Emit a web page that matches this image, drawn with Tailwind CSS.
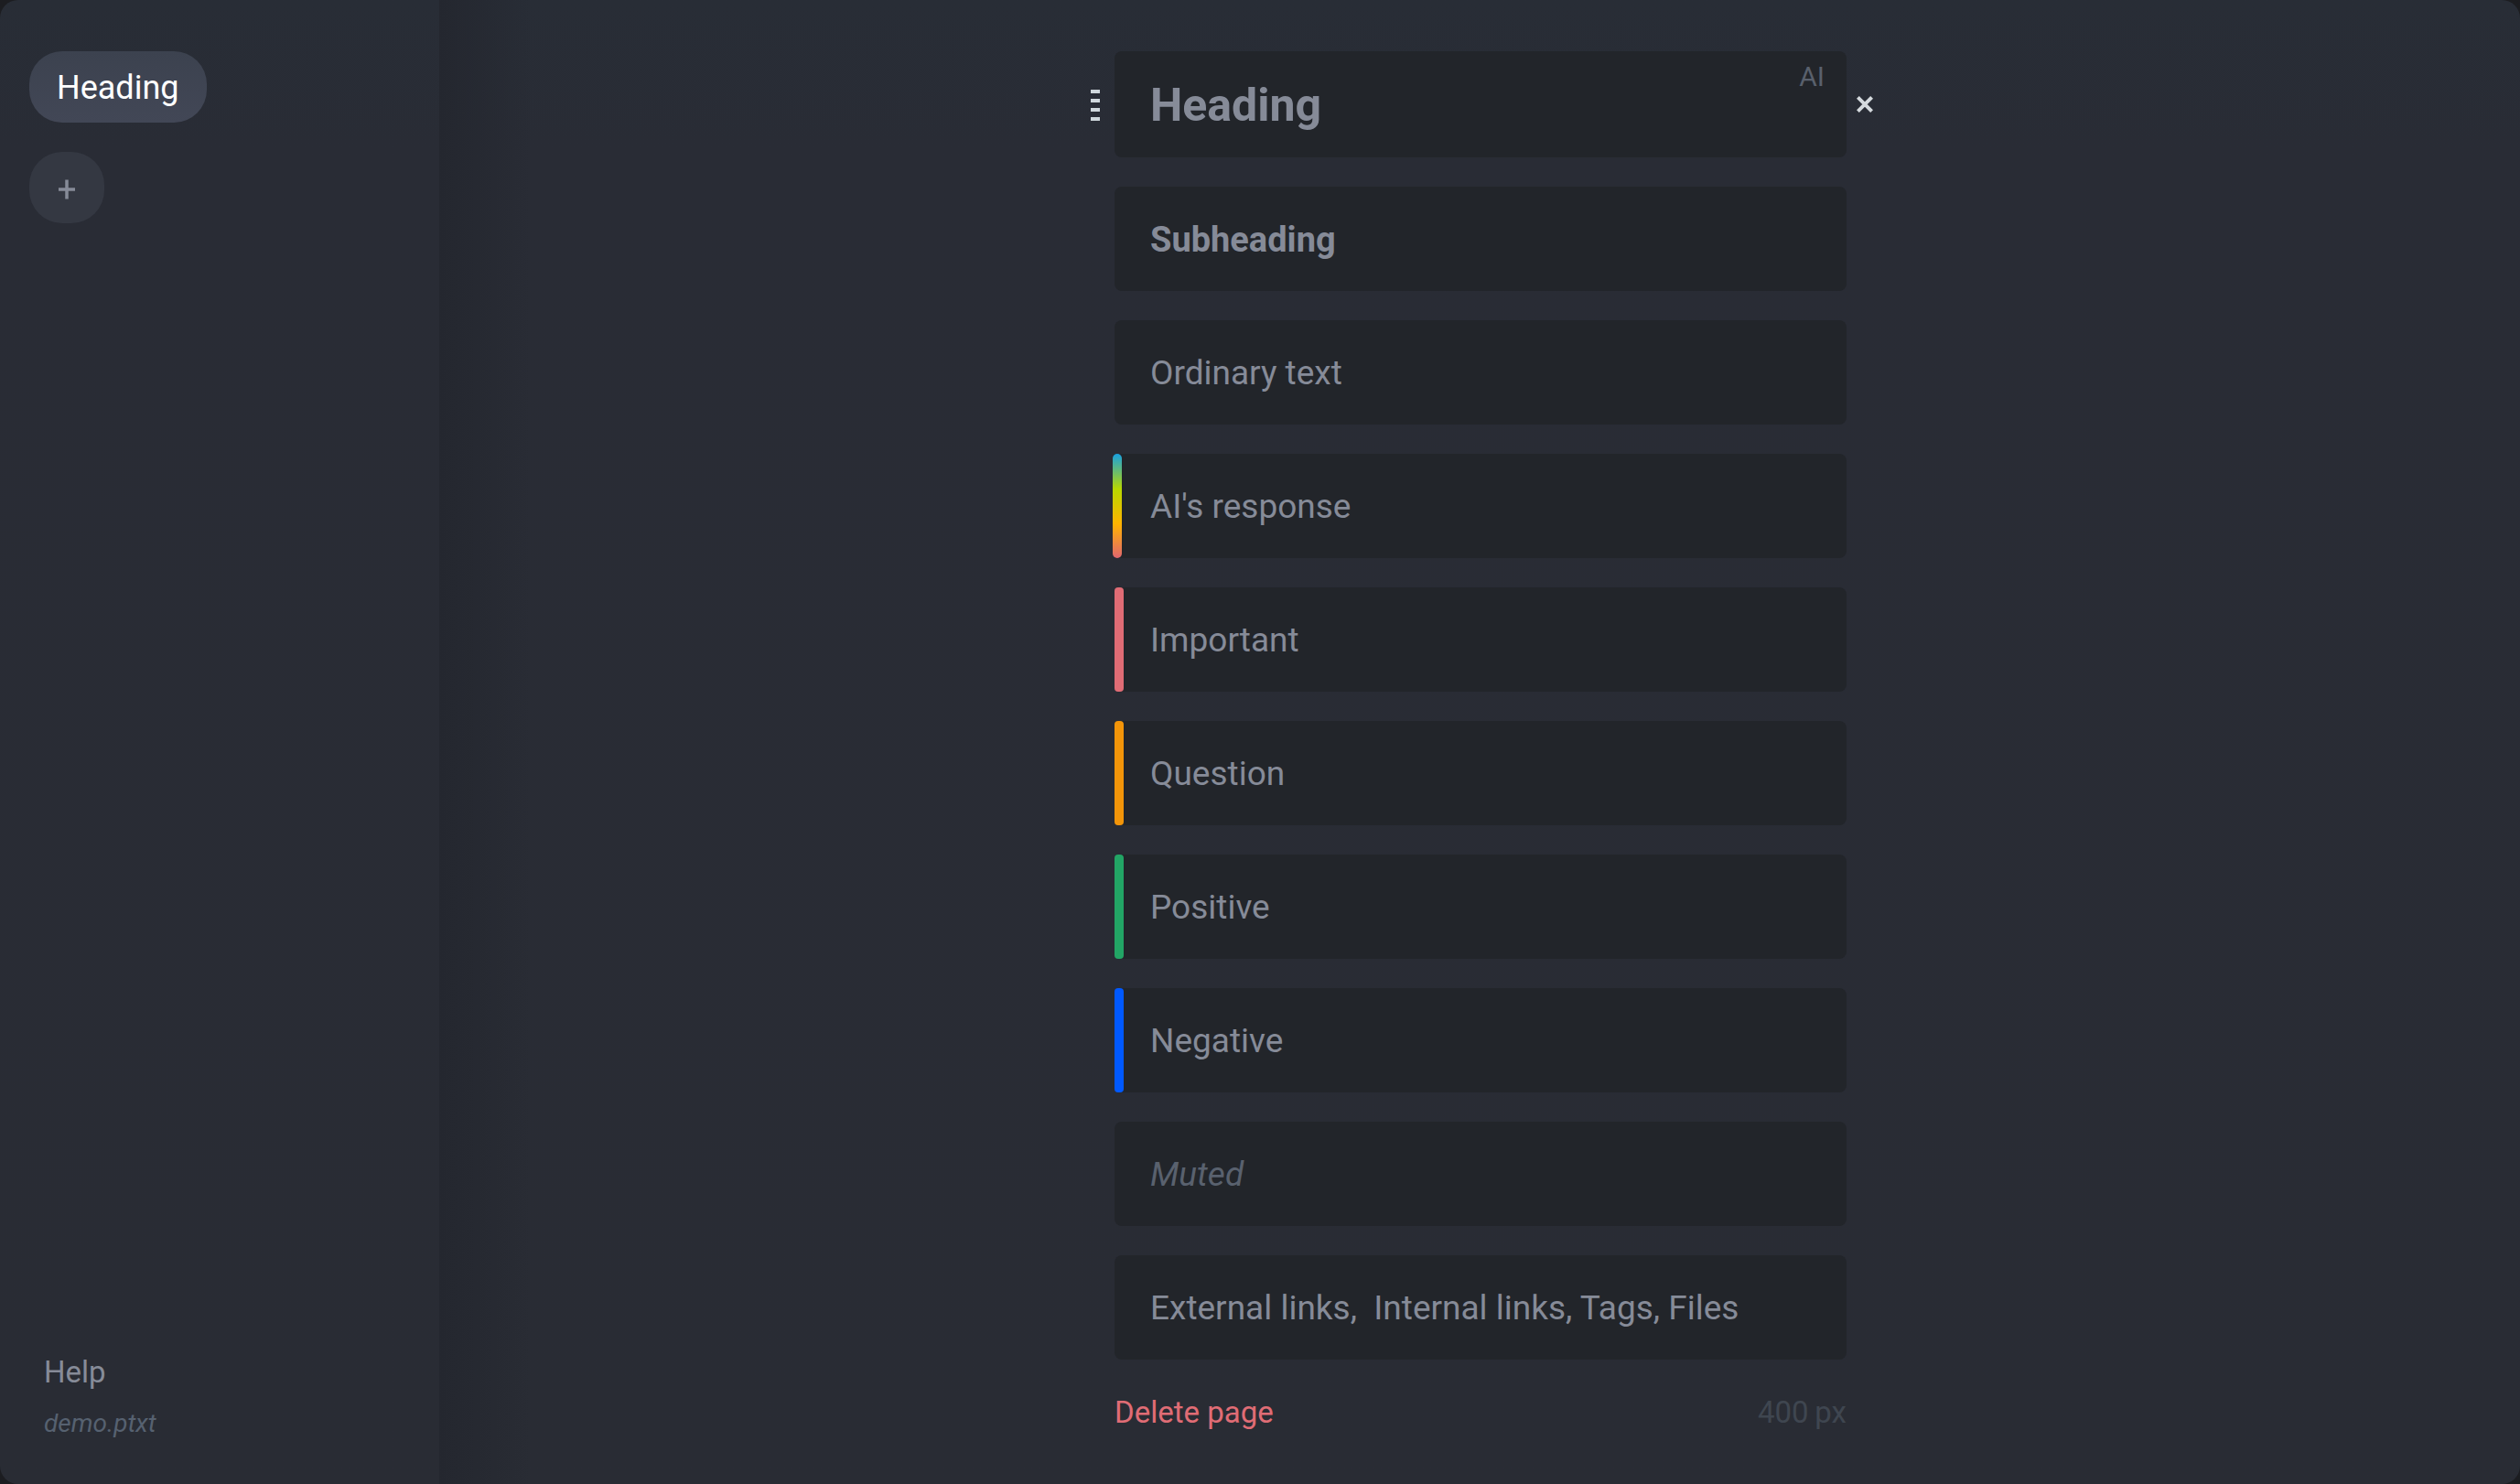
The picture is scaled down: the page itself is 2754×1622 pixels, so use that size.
<!DOCTYPE html>
<html lang="en">
<head>
<meta charset="utf-8">
<meta name="viewport" content="width=device-width, initial-scale=1">
<title>demo.ptxt</title>
<script src="https://cdn.jsdelivr.net/npm/@tailwindcss/browser@4"></script>
</head>
<body class="bg-[#1c1d21] font-['Roboto',sans-serif] text-[#868b98]">
<div class="flex min-h-screen overflow-hidden rounded-[20px] bg-linear-to-b from-[#282d36] via-[#292c35] via-10% to-[#292c34]">

  <aside class="relative flex w-[480px] shrink-0 flex-col justify-between px-8 py-14">
    <div class="absolute inset-y-0 left-full w-[100px] bg-linear-to-r from-[#24272f] to-[#24272f]/0"></div>
    <nav class="flex flex-col items-start gap-8">
      <a href="#" class="flex h-[78px] items-center rounded-[36px] bg-linear-to-b from-[#3c424f] to-[#424756] px-[30px] pt-0.5 text-[36px] leading-none text-white">Heading</a>
      <button type="button" aria-label="Add page" class="flex h-[78px] w-[82px] items-center justify-center rounded-[36px] bg-[#343842] pt-1">
        <svg width="18" height="22" viewBox="0 0 18 22" fill="none" stroke="#868b98" stroke-width="3.500"><path d="M9 0.500V21.500M0 11H18"/></svg>
      </button>
    </nav>
    <div class="-mb-2.5 flex flex-col items-start gap-4 px-4">
      <a href="#" class="text-[33px] leading-10">Help</a>
      <span class="text-[28px] leading-10 text-[#566170] italic">demo.ptxt</span>
    </div>
  </aside>

  <main class="flex grow flex-col items-center pt-14 pl-0.5">
    <div class="w-[800px]">
      <div class="flex flex-col gap-8">
        <div class="relative flex h-[116px] rounded-lg bg-[#22252a]">
          <button type="button" aria-label="Move block" class="absolute top-[42px] -left-[26px] flex flex-col gap-1.5">
            <span class="h-1 w-2.5 bg-[#cfd7dc]"></span>
            <span class="h-1 w-2.5 bg-[#cfd7dc]"></span>
            <span class="h-1 w-2.5 bg-[#cfd7dc]"></span>
            <span class="h-1 w-2.5 bg-[#cfd7dc]"></span>
          </button>
          <input aria-label="Heading block" value="Heading" class="w-full px-[39px] pt-0.5 text-[50px] font-bold outline-none">
          <button type="button" class="absolute top-3 right-6 text-[30px] leading-8 text-[#59606c]">AI</button>
          <button type="button" aria-label="Remove block" class="absolute top-[49px] left-[811px]">
            <svg width="18" height="18" viewBox="0 0 18 18" fill="none" stroke="#d5dade" stroke-width="4"><path d="M1.400 1.400L16.600 16.600M16.600 1.400L1.400 16.600"/></svg>
          </button>
        </div>
        <div class="flex h-[114px] rounded-lg bg-[#22252a]">
          <input aria-label="Subheading block" value="Subheading" class="w-full px-[39px] pt-0.5 text-[38px] font-bold outline-none">
        </div>
        <div class="flex h-[114px] rounded-lg bg-[#22252a]">
          <input aria-label="Text block" value="Ordinary text" class="w-full px-[39px] pt-0.5 text-[37px] outline-none">
        </div>
        <div class="relative flex h-[114px] rounded-lg bg-[#22252a]">
          <span class="absolute inset-y-0 -left-0.5 w-2.5 rounded-full bg-[linear-gradient(#18a0e0,#b8d800_34%,#ffb400_67%,#e0666f)]"></span>
          <input aria-label="AI block" value="AI's response" class="w-full px-[39px] pt-0.5 text-[37px] outline-none">
        </div>
        <div class="relative flex h-[114px] rounded-lg bg-[#22252a]">
          <span class="absolute inset-y-0 left-0 w-2.5 rounded-sm bg-[#e06c75]"></span>
          <input aria-label="Important block" value="Important" class="w-full px-[39px] pt-0.5 text-[37px] outline-none">
        </div>
        <div class="relative flex h-[114px] rounded-lg bg-[#22252a]">
          <span class="absolute inset-y-0 left-0 w-2.5 rounded-sm bg-[#f39509]"></span>
          <input aria-label="Question block" value="Question" class="w-full px-[39px] pt-0.5 text-[37px] outline-none">
        </div>
        <div class="relative flex h-[114px] rounded-lg bg-[#22252a]">
          <span class="absolute inset-y-0 left-0 w-2.5 rounded-sm bg-[#22a565]"></span>
          <input aria-label="Positive block" value="Positive" class="w-full px-[39px] pt-0.5 text-[37px] outline-none">
        </div>
        <div class="relative flex h-[114px] rounded-lg bg-[#22252a]">
          <span class="absolute inset-y-0 left-0 w-2.5 rounded-sm bg-[#0059ff]"></span>
          <input aria-label="Negative block" value="Negative" class="w-full px-[39px] pt-0.5 text-[37px] outline-none">
        </div>
        <div class="flex h-[114px] rounded-lg bg-[#22252a]">
          <input aria-label="Muted block" value="Muted" class="w-full px-[39px] pt-0.5 text-[37px] text-[#59616e] italic outline-none">
        </div>
        <div class="flex h-[114px] rounded-lg bg-[#22252a]">
          <input aria-label="Links block" value="External links,  Internal links, Tags, Files" class="w-full px-[39px] pt-0.5 text-[37px] outline-none">
        </div>
      </div>
      <div class="flex justify-between pt-[38px] text-[33px] leading-10">
        <button type="button" class="text-[#e06c75]">Delete page</button>
        <span class="text-[#3f4650]">400&#8201;px</span>
      </div>
    </div>
  </main>
</div>
</body>
</html>
